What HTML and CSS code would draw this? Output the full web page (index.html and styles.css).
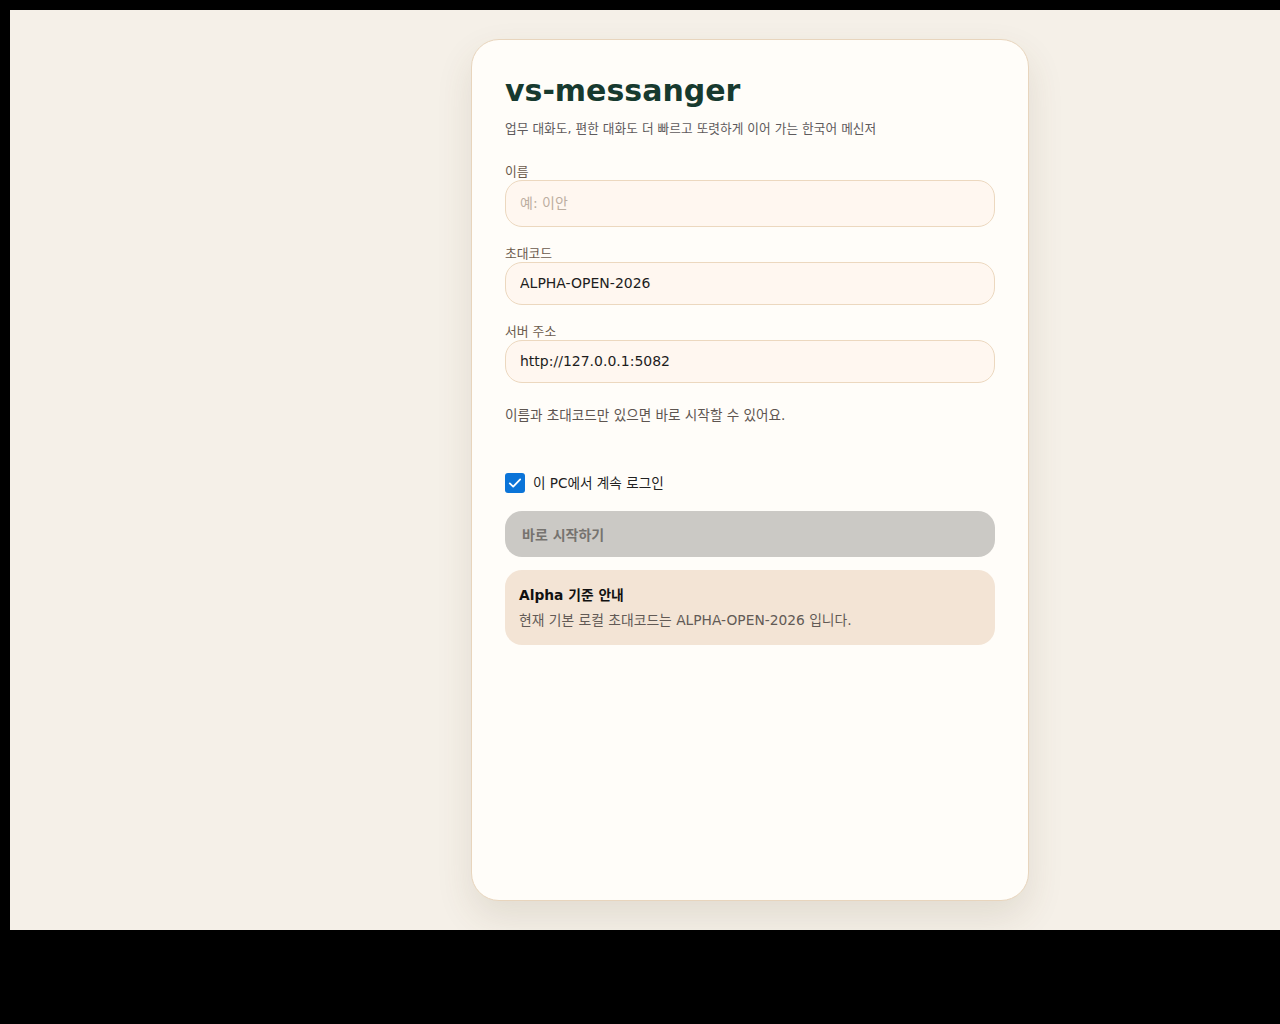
FILE: index.html
```html
<!DOCTYPE html>
<html lang="ko">

<head>
  <meta charset="UTF-8" />
  <meta name="viewport" content="width=device-width, initial-scale=1.0" />
  <title>vs-messanger</title>
  <link rel="stylesheet" href="styles.css">
</head>

<body>
  <div class="app">
    <!-- Login card -->
    <div class="login-card">
      <h1 class="brand">vs-messanger</h1>
      <p class="tagline">업무 대화도, 편한 대화도 더 빠르고 또렷하게 이어 가는 한국어 메신저</p>

      <form class="login-form" id="login-form">
        <div class="field">
          <label for="name">이름</label>
          <input type="text" id="name" class="name-input" placeholder="예: 이안" />
        </div>

        <div class="field">
          <label for="invite">초대코드</label>
          <input type="text" id="invite" value="ALPHA-OPEN-2026" />
        </div>

        <div class="field">
          <label for="server">서버 주소</label>
          <input type="text" id="server" value="http://127.0.0.1:5082" />
        </div>

        <p class="hint">이름과 초대코드만 있으면 바로 시작할 수 있어요.</p>

        <label class="remember">
          <input type="checkbox" id="remember" checked />
          <span class="check-box">
            <svg width="14" height="14" viewBox="0 0 14 14">
              <path d="M1.8 7.4 L5.2 10.6 L12.2 3.4" fill="none" stroke="#fff" stroke-width="1.8" stroke-linecap="round" stroke-linejoin="round" />
            </svg>
          </span>
          <span>이 PC에서 계속 로그인</span>
        </label>

        <button type="submit" class="start-btn" disabled>바로 시작하기</button>
      </form>

      <div class="notice">
        <strong>Alpha 기준 안내</strong>
        <p>현재 기본 로컬 초대코드는 ALPHA-OPEN-2026 입니다.</p>
      </div>
    </div>
  </div>
</body>

</html>
```

FILE: styles.css
```css
/* Page */
html,
body {
  margin: 0;
  background: #000;
}

body {
  font-family: "DejaVu Sans", "Noto Sans CJK KR", sans-serif;
  padding: 10px 0 0 10px;
}

.app {
  height: 920px;
  background-color: #f5f0e8;
  box-sizing: border-box;
  padding: 29px 0 29px 461px;
  display: flex;
}

/* Card */
.login-card {
  width: 558px;
  box-sizing: border-box;
  background-color: #fffdf9;
  border: 1px solid #e8d5bd;
  border-radius: 28px;
  padding: 33px 33px;
  box-shadow: 0 16px 36px rgba(90, 70, 40, 0.12);
}

.brand {
  margin: 0;
  font-size: 30px;
  line-height: 36px;
  font-weight: bold;
  color: #173a2f;
}

.tagline {
  margin: 11px 0 0;
  font-size: 12.7px;
  line-height: 18px;
  color: #5e5a5c;
}

/* Form */
.login-form {
  display: flex;
  flex-direction: column;
  margin-top: 26px;
}

.field {
  display: flex;
  flex-direction: column;
  gap: 1px;
  margin-bottom: 19px;
}

.field label {
  font-size: 12.8px;
  line-height: 15px;
  color: #6b5a4c;
}

.field input {
  height: 43px;
  box-sizing: border-box;
  border: 1px solid #ecd8bf;
  border-radius: 17px;
  background-color: #fff7f0;
  padding: 0 14px 1px;
  font-family: inherit;
  font-size: 14px;
  color: #1d1d1d;
  outline: none;
}

.field .name-input {
  height: 47px;
}

.field input::placeholder {
  color: #bcaea0;
}

.hint {
  margin: 3px 0 0;
  font-size: 13.6px;
  line-height: 20px;
  color: #5e5550;
}

/* Remember checkbox */
.remember {
  display: flex;
  align-items: center;
  gap: 8px;
  margin-top: 48px;
  font-size: 13.6px;
  line-height: 20px;
  color: #222;
}

.remember input {
  display: none;
}

.check-box {
  width: 20px;
  height: 20px;
  border-radius: 3px;
  background-color: #0b74d8;
  display: flex;
  align-items: center;
  justify-content: center;
}

.start-btn {
  margin-top: 18px;
  height: 46px;
  border: none;
  border-radius: 17px;
  background-color: #cbc9c5;
  color: #76736f;
  font-family: inherit;
  font-size: 14px;
  font-weight: bold;
  text-align: left;
  padding: 0 17px;
}

/* Notice box */
.notice {
  margin-top: 13px;
  background-color: #f3e4d5;
  border-radius: 17px;
  padding: 16px 14px 15px;
}

.notice strong {
  display: block;
  font-size: 13.8px;
  line-height: 18px;
  color: #111;
}

.notice p {
  margin: 6px 0 0;
  font-size: 13.8px;
  line-height: 20px;
  color: #625a55;
}
```
